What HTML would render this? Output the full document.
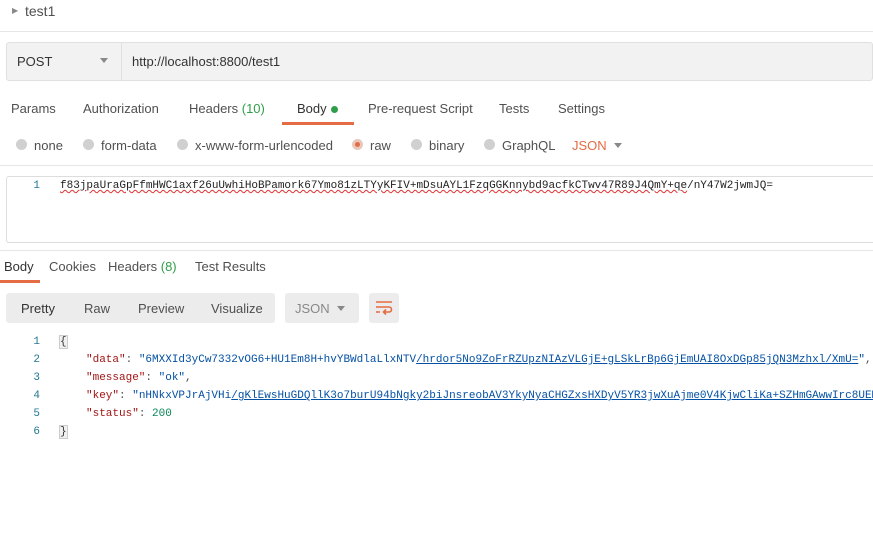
<!DOCTYPE html>
<html><head><style>
*{margin:0;padding:0;box-sizing:border-box}
body{width:873px;height:533px;background:#fff;font-family:"Liberation Sans",sans-serif;font-size:13px;color:#505050;position:relative;overflow:hidden}
.a{position:absolute;white-space:nowrap}
.mono{font-family:"Liberation Mono",monospace;font-size:11px}
.rad{position:absolute;width:11px;height:11px;border-radius:50%;background:#d0d0d0}
.str{color:#0451a5}.key{color:#a31515}.num{color:#098658}
.ln{color:#237893;text-align:right;width:20px}
.w{text-decoration:underline wavy #e03030;text-decoration-thickness:1px}
</style></head><body>
<div class="a" style="left:12px;top:6px;font-size:8px;color:#888">&#9654;</div>
<div class="a" style="left:25px;top:3px;font-size:14px;color:#505050">test1</div>
<div class="a" style="left:0;top:31px;width:873px;height:1px;background:#e6e6e6"></div>
<div class="a" style="left:6px;top:42px;width:867px;height:39px;background:#f2f2f2;border:1px solid #e0e0e0;border-radius:3px"></div>
<div class="a" style="left:121px;top:43px;width:1px;height:37px;background:#e0e0e0"></div>
<div class="a" style="left:17px;top:54px;font-size:13px;color:#333">POST</div>
<div class="a" style="left:100px;top:58px;width:0;height:0;border-left:4px solid transparent;border-right:4px solid transparent;border-top:5px solid #888"></div>
<div class="a" style="left:132px;top:54px;font-size:13px;color:#333">http://localhost:8800/test1</div>

<div class="a" style="left:11px;top:101px">Params</div>
<div class="a" style="left:83px;top:101px">Authorization</div>
<div class="a" style="left:189px;top:101px">Headers <span style="color:#2f9e4a">(10)</span></div>
<div class="a" style="left:297px;top:101px;color:#333">Body</div>
<div class="a" style="left:331px;top:106px;width:7px;height:7px;border-radius:50%;background:#2f9e4a"></div>
<div class="a" style="left:282px;top:122px;width:72px;height:3px;background:#e56b43"></div>
<div class="a" style="left:368px;top:101px">Pre-request Script</div>
<div class="a" style="left:499px;top:101px">Tests</div>
<div class="a" style="left:558px;top:101px">Settings</div>

<div class="rad" style="left:16px;top:139px"></div><div class="a" style="left:34px;top:138px">none</div>
<div class="rad" style="left:83px;top:139px"></div><div class="a" style="left:101px;top:138px">form-data</div>
<div class="rad" style="left:177px;top:139px"></div><div class="a" style="left:195px;top:138px">x-www-form-urlencoded</div>
<div class="rad" style="left:352px;top:139px;background:#e8c8bd"></div><div class="a" style="left:355px;top:142px;width:5px;height:5px;border-radius:50%;background:#e56b43"></div><div class="a" style="left:370px;top:138px">raw</div>
<div class="rad" style="left:411px;top:139px"></div><div class="a" style="left:429px;top:138px">binary</div>
<div class="rad" style="left:484px;top:139px"></div><div class="a" style="left:502px;top:138px">GraphQL</div>
<div class="a" style="left:572px;top:138px;color:#e56b43">JSON</div>
<div class="a" style="left:614px;top:143px;width:0;height:0;border-left:4px solid transparent;border-right:4px solid transparent;border-top:5px solid #888"></div>
<div class="a" style="left:0;top:165px;width:873px;height:1px;background:#e6e6e6"></div>

<div class="a" style="left:6px;top:176px;width:867px;height:67px;border:1px solid #ddd;border-right:none;border-radius:3px 0 0 3px"></div>
<div class="a mono ln" style="left:20px;top:180px">1</div>
<div class="a mono" style="left:60px;top:180px;color:#222"><span class="w">f83jpaUraGpFfmHWC1axf26uUwhiHoBPamork67Ymo81zLTYyKFIV+mDsuAYL1FzqGGKnnybd9acfkCTwv47R89J4QmY+qe</span>/nY47W2jwmJQ=</div>

<div class="a" style="left:0;top:250px;width:873px;height:1px;background:#e6e6e6"></div>
<div class="a" style="left:4px;top:259px;color:#333">Body</div>
<div class="a" style="left:0;top:280px;width:40px;height:3px;background:#e56b43"></div>
<div class="a" style="left:49px;top:259px">Cookies</div>
<div class="a" style="left:108px;top:259px">Headers <span style="color:#2f9e4a">(8)</span></div>
<div class="a" style="left:195px;top:259px">Test Results</div>

<div class="a" style="left:6px;top:293px;width:269px;height:30px;background:#ececec;border-radius:3px"></div>
<div class="a" style="left:21px;top:301px;color:#333">Pretty</div>
<div class="a" style="left:84px;top:301px">Raw</div>
<div class="a" style="left:138px;top:301px">Preview</div>
<div class="a" style="left:211px;top:301px">Visualize</div>
<div class="a" style="left:285px;top:293px;width:74px;height:30px;background:#ececec;border-radius:3px"></div>
<div class="a" style="left:295px;top:301px;color:#888">JSON</div>
<div class="a" style="left:337px;top:306px;width:0;height:0;border-left:4px solid transparent;border-right:4px solid transparent;border-top:5px solid #888"></div>
<div class="a" style="left:369px;top:293px;width:30px;height:30px;background:#ececec;border-radius:3px"></div>
<svg class="a" style="left:375px;top:300px" width="18" height="16" viewBox="0 0 18 16"><path d="M1 2H17M1 7H14a2.5 2.5 0 0 1 0 5H9M11 9.5L8.5 12L11 14.5M1 12H5" stroke="#e56b43" stroke-width="1.6" fill="none"/></svg>

<div class="a mono ln" style="left:20px;top:336px">1</div><div class="a mono" style="left:60px;top:336px;color:#333;background:#f0f0f0;outline:1px solid #ccc">{</div>
<div class="a mono ln" style="left:20px;top:354px">2</div><div class="a mono" style="left:86px;top:354px"><span class="key">"data"</span>: <span class="str">"6MXXId3yCw7332vOG6+HU1Em8H+hvYBWdlaLlxNTV<span style="text-decoration:underline">/hrdor5No9ZoFrRZUpzNIAzVLGjE+gLSkLrBp6GjEmUAI8OxDGp85jQN3Mzhxl/XmU=</span>"</span>,</div>
<div class="a mono ln" style="left:20px;top:372px">3</div><div class="a mono" style="left:86px;top:372px"><span class="key">"message"</span>: <span class="str">"ok"</span>,</div>
<div class="a mono ln" style="left:20px;top:390px">4</div><div class="a mono" style="left:86px;top:390px"><span class="key">"key"</span>: <span class="str">"nHNkxVPJrAjVHi<span style="text-decoration:underline">/gKlEwsHuGDQllK3o7burU94bNgky2biJnsreobAV3YkyNyaCHGZxsHXDyV5YR3jwXuAjme0V4KjwCliKa+SZHmGAwwIrc8UEM</span></span></div>
<div class="a mono ln" style="left:20px;top:408px">5</div><div class="a mono" style="left:86px;top:408px"><span class="key">"status"</span>: <span class="num">200</span></div>
<div class="a mono ln" style="left:20px;top:426px">6</div><div class="a mono" style="left:60px;top:426px;color:#333;background:#f0f0f0;outline:1px solid #ccc">}</div>
</body></html>
